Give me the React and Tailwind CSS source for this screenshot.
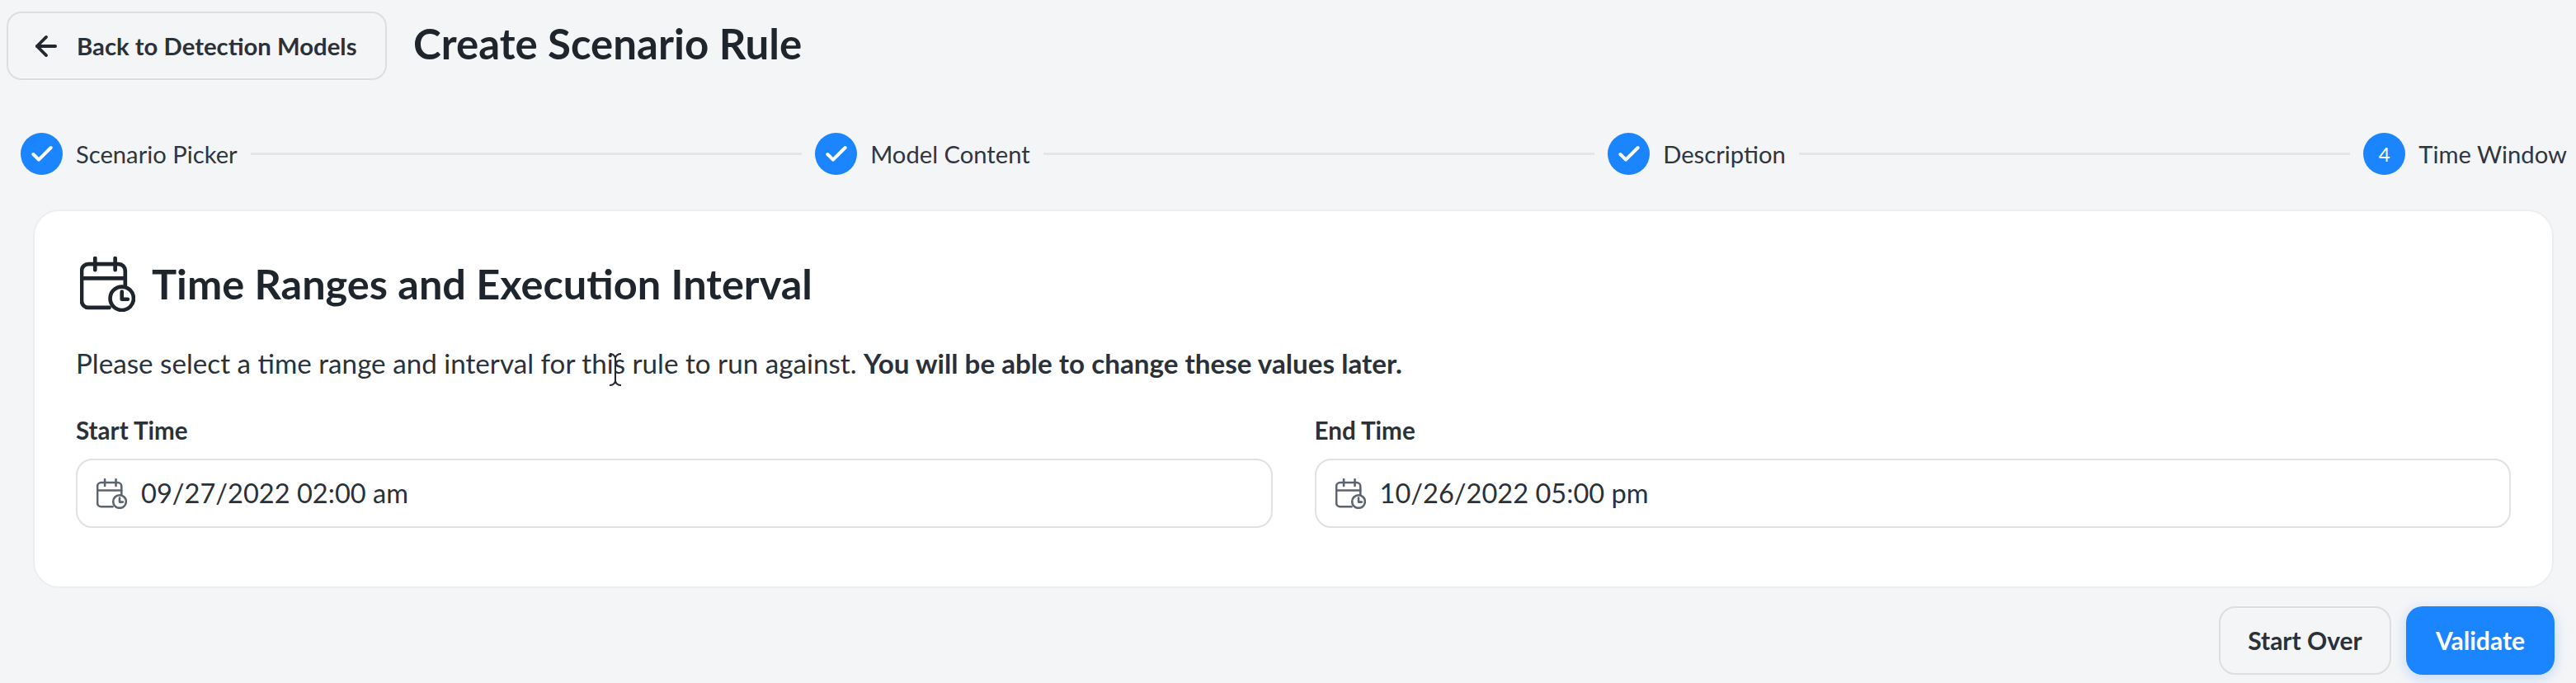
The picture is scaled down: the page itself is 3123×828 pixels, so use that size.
import React from "react";
import { ArrowLeft, Check } from "lucide-react";

const steps = [
  { label: "Scenario Picker", done: true },
  { label: "Model Content", done: true },
  { label: "Description", done: true },
  { label: "Time Window", done: false, num: 4 },
];

const CalendarClockIcon = ({ className }) => (
  <svg viewBox="0 0 66 66" fill="none" stroke="currentColor" strokeWidth="4.6" strokeLinecap="round" strokeLinejoin="round" className={className}>
    <path d="M54 35V17a8 8 0 0 0-8-8H10a8 8 0 0 0-8 8v36a8 8 0 0 0 8 8h25" />
    <path d="M18 2v14M42 2v14M2 26h52" />
    <circle cx="50" cy="50" r="14" />
    <path d="M50 42v9h7" />
  </svg>
);

const DateField = ({ label, value }) => (
  <div className="flex-1 min-w-0">
    <div className="text-[29.6px] leading-[34px] font-bold text-[#2b3138]">{label}</div>
    <div className="mt-[17px] h-[84px] flex items-center pl-[23px] bg-white border-2 border-[#dfe1e5] rounded-[20px]">
      <CalendarClockIcon className="w-[37px] h-[37px] text-[#5b6470]" />
      <span className="ml-[17px] text-[32.6px] text-[#2b3138]">{value}</span>
    </div>
  </div>
);

export default function App() {
  return (
    <div className="relative w-[3123px] h-[828px] overflow-hidden bg-[#f4f5f7] font-['Lato','Liberation_Sans',sans-serif]">
      {/* Header */}
      <div className="flex items-center pl-[8px] pt-[14px] gap-[32px]">
        <button className="w-[461px] h-[83px] flex items-center pl-[27px] gap-[18px] border-2 border-[#dcdee2] rounded-[18px] bg-[#f4f5f7]">
          <ArrowLeft className="w-[38px] h-[38px] text-[#22282f]" strokeWidth={2.4} />
          <span className="text-[29.3px] font-bold text-[#2b3138]">Back to Detection Models</span>
        </button>
        <h1 className="text-[51px] font-bold leading-none text-[#1f252c] -mt-[6px]">Create Scenario Rule</h1>
      </div>

      {/* Stepper */}
      <div className="mt-[64px] pl-[25px] pr-[11px] h-[51px] flex items-center">
        {steps.map((s, i) => (
          <React.Fragment key={s.label}>
            {i > 0 && <div className="flex-1 h-[3px] mx-[16px] bg-[#e4e5e8]" />}
            <div className="flex items-center gap-[16px]">
              <div className="w-[51px] h-[51px] rounded-full bg-[#1a85ff] flex items-center justify-center text-white">
                {s.done ? <Check className="w-[32px] h-[32px]" strokeWidth={3} /> : <span className="text-[24px]">{s.num}</span>}
              </div>
              <span className="text-[29.2px] text-[#30363d]">{s.label}</span>
            </div>
          </React.Fragment>
        ))}
      </div>

      {/* Card */}
      <div className="mt-[42px] ml-[40px] w-[3056px] h-[459px] bg-white border-2 border-[#eceef0] rounded-[32px] pt-[55px] px-[50px]">
        <div className="flex items-center gap-[20px] pl-[5px]">
          <CalendarClockIcon className="w-[67px] h-[67px] text-[#1f252c]" />
          <h2 className="text-[50.5px] font-bold leading-none text-[#1f252c]">Time Ranges and Execution Interval</h2>
        </div>
        <p className="mt-[42px] text-[33.2px] leading-[40px] text-[#2b3138]">
          Please select a time range and interval for this rule to run against. <span className="font-bold">You will be able to change these values later.</span>
        </p>
        <div className="mt-[45px] flex gap-[51px]">
          <DateField label="Start Time" value="09/27/2022 02:00 am" />
          <DateField label="End Time" value="10/26/2022 05:00 pm" />
        </div>
      </div>

      {/* Footer actions */}
      <div className="mt-[22px] flex justify-end pr-[26px] gap-[18px]">
        <button className="w-[209px] h-[83px] border-2 border-[#dcdee2] rounded-[20px] text-[30px] font-bold text-[#2b3138]">Start Over</button>
        <button className="w-[180px] h-[83px] rounded-[20px] bg-[#1a85ff] text-[30px] font-bold text-white shadow-[0_4px_16px_rgba(26,133,255,0.25)]">Validate</button>
      </div>

      {/* Mouse cursor */}
      <svg viewBox="0 0 16 40" fill="none" stroke="#22282f" strokeWidth="2" className="absolute left-[738px] top-[428px] w-[16px] h-[40px]">
        <path d="M1 1c3 0 6 1 7 5 1-4 4-5 7-5M8 6v28M1 39c3 0 6-1 7-5 1 4 4 5 7 5" />
      </svg>
    </div>
  );
}
